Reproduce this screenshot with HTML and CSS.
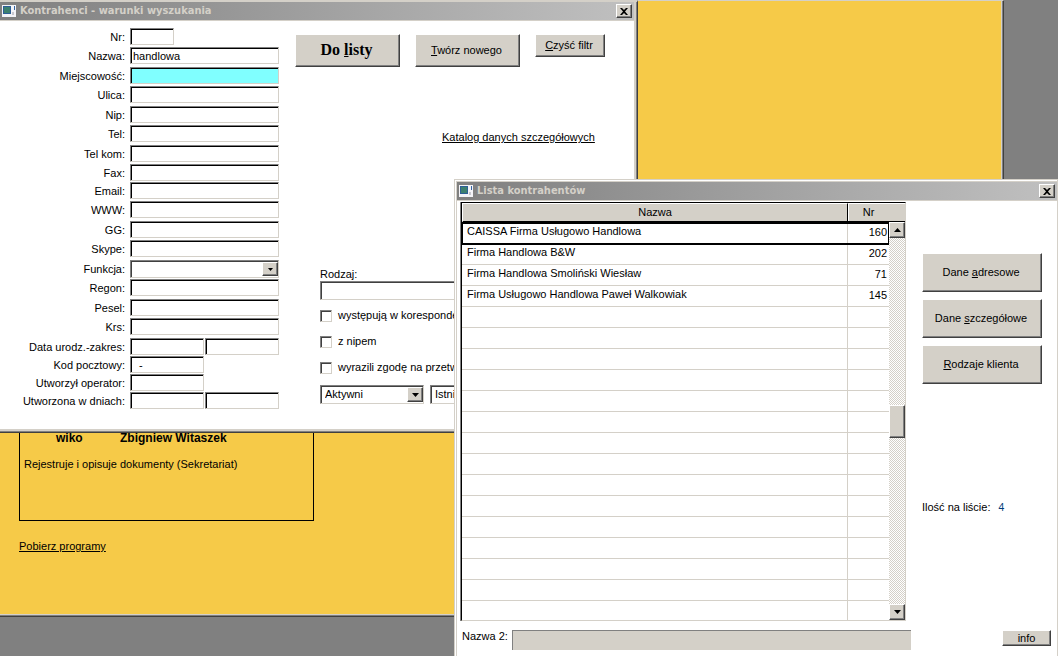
FILE: index.html
```html
<!DOCTYPE html>
<html lang="pl">
<head>
<meta charset="utf-8">
<title>Kontrahenci</title>
<link rel="stylesheet" href="styles.css">
</head>
<body>
<div class="desktop">

  <main class="backdrop">
    <section class="user-box">
      <p class="user-name"><b>wiko</b><b>Zbigniew Witaszek</b></p>
      <p>Rejestruje i opisuje dokumenty (Sekretariat)</p>
    </section>
    <a class="link" href="#programy">Pobierz programy</a>
  </main>

  <section class="window search-window">
    <header class="titlebar">
      <svg class="app-icon" viewBox="0 0 14 12"><rect width="14" height="12" fill="#f4f4f8"/><rect x="1" y="1" width="8" height="8" fill="#2d5f96"/><rect x="2" y="2" width="6" height="6" fill="#3c8070"/><rect x="10" y="7" width="2" height="3" fill="#c8c8d0"/><rect x="12" y="1" width="1" height="4" fill="#3465a4"/></svg>
      <h1>Kontrahenci - warunki wyszukania</h1>
      <button class="close" aria-label="Zamknij"><svg viewBox="0 0 8 7" width="8" height="7"><path d="M0 0h2l2 2 2-2h2L5 3.500 8 7H6L4 5 2 7H0l3-3.500z"/></svg></button>
    </header>
    <form class="search-body">
      <div class="fields">
        <label for="nr">Nr:</label><input id="nr" class="tiny">
        <label for="nazwa">Nazwa:</label><input id="nazwa" value="handlowa">
        <label for="miejsc">Miejscowość:</label><input id="miejsc" class="active">
        <label for="ulica">Ulica:</label><input id="ulica">
        <label for="nip">Nip:</label><input id="nip">
        <label for="tel">Tel:</label><input id="tel">
        <label for="kom">Tel kom:</label><input id="kom">
        <label for="fax">Fax:</label><input id="fax">
        <label for="email">Email:</label><input id="email">
        <label for="www">WWW:</label><input id="www">
        <label for="gg">GG:</label><input id="gg">
        <label for="skype">Skype:</label><input id="skype">
        <label for="funkcja">Funkcja:</label>
        <div class="select compact"><select id="funkcja"><option></option></select><span class="drop"><svg viewBox="0 0 7 4" width="5" height="3"><path d="M0 0h7L3.500 4z"/></svg></span></div>
        <label for="regon">Regon:</label><input id="regon">
        <label for="pesel">Pesel:</label><input id="pesel">
        <label for="krs">Krs:</label><input id="krs">
        <label for="ur1">Data urodz.-zakres:</label><div class="pair"><input id="ur1"><input aria-label="Data urodz. do"></div>
        <label for="kod">Kod pocztowy:</label><div class="pair"><input id="kod" value="  -"></div>
        <label for="oper">Utworzył operator:</label><div class="pair"><input id="oper"></div>
        <label for="dni">Utworzona w dniach:</label><div class="pair"><input id="dni"><input aria-label="Utworzona do dnia"></div>
      </div>
      <div class="options">
        <div class="actions">
          <button type="button" class="btn primary"><span>Do <u>l</u>isty</span></button>
          <button type="button" class="btn wide"><span><u>T</u>wórz nowego</span></button>
          <button type="button" class="btn small"><span><u>C</u>zyść filtr</span></button>
        </div>
        <a class="link catalog" href="#katalog">Katalog danych szczegółowych</a>
        <div class="filters">
          <label for="rodzaj">Rodzaj:</label>
          <input id="rodzaj" class="kind">
          <label class="check"><input type="checkbox">występują w korespondencji</label>
          <label class="check"><input type="checkbox">z nipem</label>
          <label class="check"><input type="checkbox">wyrazili zgodę na przetwarzanie</label>
          <div class="selects">
            <div class="select"><select aria-label="Aktywność"><option>Aktywni</option></select><span class="drop"><svg viewBox="0 0 7 4" width="7" height="4"><path d="M0 0h7L3.500 4z"/></svg></span></div>
            <div class="select"><select aria-label="Istnienie"><option>Istniejący</option></select><span class="drop"><svg viewBox="0 0 7 4" width="7" height="4"><path d="M0 0h7L3.500 4z"/></svg></span></div>
          </div>
        </div>
      </div>
    </form>
  </section>

  <section class="window list-window">
    <header class="titlebar">
      <svg class="app-icon" viewBox="0 0 14 12"><rect width="14" height="12" fill="#f4f4f8"/><rect x="1" y="1" width="8" height="8" fill="#2d5f96"/><rect x="2" y="2" width="6" height="6" fill="#3c8070"/><rect x="10" y="7" width="2" height="3" fill="#c8c8d0"/><rect x="12" y="1" width="1" height="4" fill="#3465a4"/></svg>
      <h2>Lista kontrahentów</h2>
      <button class="close" aria-label="Zamknij"><svg viewBox="0 0 8 7" width="8" height="7"><path d="M0 0h2l2 2 2-2h2L5 3.500 8 7H6L4 5 2 7H0l3-3.500z"/></svg></button>
    </header>
    <div class="list-body">
      <div class="grid-frame">
        <table>
          <colgroup><col><col class="col-nr"></colgroup>
          <thead><tr><th>Nazwa</th><th class="nr-head">Nr</th></tr></thead>
          <tbody>
            <tr class="selected"><td>CAISSA Firma Usługowo Handlowa</td><td>160</td></tr>
            <tr><td>Firma Handlowa B&amp;W</td><td>202</td></tr>
            <tr><td>Firma Handlowa Smoliński Wiesław</td><td>71</td></tr>
            <tr><td>Firma Usługowo Handlowa Paweł Walkowiak</td><td>145</td></tr>
            <tr><td></td><td></td></tr><tr><td></td><td></td></tr><tr><td></td><td></td></tr>
            <tr><td></td><td></td></tr><tr><td></td><td></td></tr><tr><td></td><td></td></tr>
            <tr><td></td><td></td></tr><tr><td></td><td></td></tr><tr><td></td><td></td></tr>
            <tr><td></td><td></td></tr><tr><td></td><td></td></tr><tr><td></td><td></td></tr>
            <tr><td></td><td></td></tr><tr><td></td><td></td></tr><tr class="last"><td></td><td></td></tr>
          </tbody>
        </table>
        <div class="scroll">
          <div class="scroll-head"></div>
          <button class="arrow" aria-label="W górę"><svg viewBox="0 0 7 4" width="7" height="4"><path d="M0 4h7L3.500 0z"/></svg></button>
          <div class="track"><div class="thumb"></div></div>
          <button class="arrow" aria-label="W dół"><svg viewBox="0 0 7 4" width="7" height="4"><path d="M0 0h7L3.500 4z"/></svg></button>
        </div>
      </div>
      <aside class="side">
        <button class="btn tall"><span>Dane <u>a</u>dresowe</span></button>
        <button class="btn tall"><span>Dane <u>s</u>zczegółowe</span></button>
        <button class="btn tall"><span><u>R</u>odzaje klienta</span></button>
        <p class="count">Ilość na liście: <output>4</output></p>
      </aside>
    </div>
    <footer class="list-foot">
      <label for="nazwa2">Nazwa 2:</label><input id="nazwa2" class="readonly" readonly>
      <button class="btn info">info</button>
    </footer>
  </section>
</div>
</body>
</html>
```

FILE: styles.css
```css
* { box-sizing: border-box; }

:root {
  --face: #d4d0c8;
  --shade: #808080;
  --dark: #404040;
  --yellow: #f6ca48;
}

body {
  margin: 0;
  font: 11px/13px "Liberation Sans", Arial, sans-serif;
  color: #000;
}

p, h1, h2 { margin: 0; }

input, select, button { font: inherit; color: inherit; border-radius: 0; margin: 0; }

.desktop {
  position: relative;
  height: 100vh;
  overflow: hidden;
  background: var(--shade);
}

/* Main application form behind the dialogs */
.backdrop {
  position: absolute;
  left: 0;
  right: 54px;
  top: 0;
  padding: 300px 19px 63px;
  background: var(--yellow);
  border-top: 1px solid var(--face);
  border-right: 1px solid var(--dark);
  border-bottom: 1px solid var(--dark);
  box-shadow: inset -1px -1px var(--shade), inset -2px -2px var(--face);
}

.user-box {
  width: 295px;
  height: 220px;
  margin-bottom: 19px;
  padding: 130px 4px 0;
  border: 1px solid #000;
}

.user-name {
  display: grid;
  grid-template-columns: 64px 1fr;
  margin-bottom: 13px;
  padding-left: 32px;
  font-size: 12px;
}

.link { color: #000; text-decoration: underline; text-underline-offset: 1px; }

/* Windows */
.window { position: absolute; background: #fff; }

.search-window {
  left: 0;
  top: 0;
  width: 638px;
  padding: 0 3px 3px 0;
  border-top: 2px solid var(--face);
  border-right: 1px solid var(--dark);
  border-bottom: 1px solid var(--dark);
  box-shadow: inset -1px -1px var(--shade), inset -3px -3px var(--face);
}

.list-window {
  left: 454px;
  right: 0;
  top: 179px;
  bottom: 0;
  padding: 2px 0 0 2px;
  border: 1px solid var(--face);
  border-bottom: 0;
  box-shadow: inset 1px 1px #fff, inset 2px 2px var(--face);
}

.titlebar {
  display: flex;
  align-items: center;
  height: 19px;
  padding: 0 2px;
  gap: 4px;
  background: linear-gradient(90deg, #808080, #c0c0c0);
  border-bottom: 1px solid var(--face);
}

.titlebar h1, .titlebar h2 {
  flex: 1;
  font: bold 11px/16px "DejaVu Sans Condensed", "DejaVu Sans", sans-serif;
  color: var(--face);
}

.app-icon { width: 14px; height: 12px; }

.close, .drop, .arrow, .thumb {
  display: flex;
  align-items: center;
  justify-content: center;
  padding: 0;
  background: var(--face);
  border: 1px solid;
  border-color: #fff var(--dark) var(--dark) #fff;
  box-shadow: inset -1px -1px var(--shade);
}

.close { width: 16px; height: 14px; }

/* Search form */
.search-body { display: flex; gap: 16px; height: 408px; }

.fields {
  display: grid;
  grid-template-columns: 125px 149px;
  grid-template-rows: repeat(3, 19px 20px) 19px 18px repeat(4, 19px 20px) repeat(4, 18px);
  column-gap: 5px;
  align-items: start;
  align-content: start;
  padding-top: 7px;
}

.fields label { text-align: right; line-height: 18px; }

input:not([type="checkbox"]), select {
  width: 100%;
  min-width: 0;
  height: 17px;
  padding: 0 0 0 2px;
  background: #fff;
  border: 1px solid;
  border-color: var(--shade) var(--face) var(--face) var(--shade);
  box-shadow: inset 1px 1px #000;
  outline: 0;
}

.fields input.tiny { width: 44px; }
.fields input.active { background: #80ffff; }
#kod { padding-left: 2px; }

.pair { display: grid; grid-template-columns: 1fr 1fr; gap: 1px; }

.select { position: relative; }

.select select { height: 19px; padding-left: 4px; appearance: none; box-shadow: inset 1px 1px var(--dark); }
.select.compact select { height: 18px; }

.drop {
  position: absolute;
  right: 1px;
  top: 2px;
  bottom: 2px;
  width: 16px;
  pointer-events: none;
}

.btn {
  padding: 0 2px 1px 0;
  background: var(--face);
  border: 1px solid;
  border-color: #fff var(--dark) var(--dark) #fff;
  box-shadow: inset -1px -1px var(--shade);
}

.btn u { text-underline-offset: 1px; }

.options { flex: 1; padding-top: 13px; }

.actions { display: flex; align-items: flex-start; gap: 15px; }
.btn.primary { width: 105px; height: 33px; font: bold 16px/18px "Liberation Serif", serif; }
.btn.wide { width: 105px; height: 33px; }
.btn.small { width: 70px; height: 23px; }

.catalog { display: block; margin: 64px 0 124px 147px; }

.filters { display: grid; width: 240px; margin-left: 25px; }

.filters .kind { height: 19px; margin-bottom: 9px; box-shadow: inset 1px 1px var(--dark); }

.check { display: flex; align-items: center; gap: 6px; height: 13px; margin-bottom: 13px; }

.check input {
  width: 12px;
  height: 12px;
  margin: 0;
  appearance: none;
  background: #fff;
  border: 1px solid;
  border-color: var(--shade) var(--face) var(--face) var(--shade);
  box-shadow: inset 1px 1px var(--dark);
}

.selects { display: grid; grid-template-columns: 104px 104px; gap: 6px; margin-top: -2px; }

/* Contractor list */
.list-body { display: flex; gap: 16px; padding: 1px 15px 0 4px; }

.grid-frame {
  flex: 1;
  display: flex;
  border: 1px solid;
  border-color: #000 var(--face) var(--face) #000;
  box-shadow: -1px 0 var(--shade);
}

table { flex: 1; border-collapse: separate; border-spacing: 0; table-layout: fixed; }
.col-nr { width: 42px; }

th {
  height: 20px;
  padding: 0 0 1px;
  font-weight: normal;
  background: var(--face);
  border: 1px solid #fff;
  border-right: 0;
  border-bottom: 2px solid #000;
}

.nr-head { border-left: 1px solid #000; box-shadow: inset 1px 0 #fff; }

td {
  height: 21px;
  padding: 0 2px 3px 5px;
  border-bottom: 1px solid var(--face);
}

td + td { padding: 0 2px 1px 0; text-align: right; border-left: 1px solid var(--face); }

.selected { outline: 2px solid #000; outline-offset: -1px; }
.last td { height: 19px; border-bottom: 0; }

.scroll { display: flex; flex-direction: column; width: 16px; }
.scroll-head { height: 19px; background: var(--face); border-top: 1px solid #fff; border-bottom: 1px solid #000; }
.arrow { width: 16px; height: 16px; }

.track {
  flex: 1;
  display: flex;
  align-items: center;
  background: conic-gradient(var(--face) 25%, #fff 0 50%, var(--face) 0 75%, #fff 0) 0 0 / 2px 2px;
}

.thumb { width: 16px; height: 33px; }

.side { display: flex; flex-direction: column; width: 120px; padding-top: 51px; gap: 7px; }
.btn.tall { height: 39px; }

.count { margin-top: 109px; }
.count output { margin-left: 5px; font: 10px "Noto Sans", sans-serif; color: #003a78; }

.list-foot { display: flex; align-items: flex-start; gap: 4px; padding: 9px 6px 0 5px; }

.list-foot .readonly {
  flex: 1;
  height: 20px;
  margin-right: 87px;
  background: var(--face);
  border-right: 0;
  border-bottom: 0;
  box-shadow: none;
}

.btn.info { width: 49px; height: 16px; padding: 0; line-height: 12px; }
```
